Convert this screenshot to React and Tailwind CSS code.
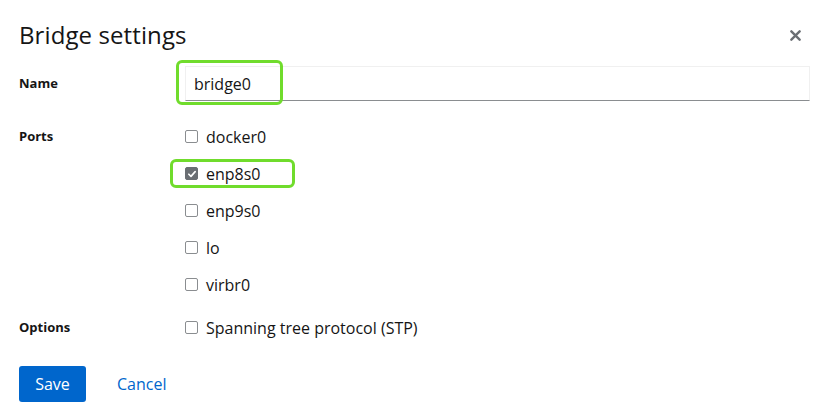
import React, { useState } from 'react';

const ports = ['docker0', 'enp8s0', 'enp9s0', 'lo', 'virbr0'];

const Checkbox = ({ checked, onChange }) => (
  <button
    type="button"
    onClick={onChange}
    className={`w-[13px] h-[13px] rounded-[2px] flex items-center justify-center shrink-0 ${
      checked ? 'bg-[#6a6e73] border border-[#6a6e73]' : 'bg-white border border-[#8a8d90]'
    }`}
  >
    {checked && (
      <svg viewBox="0 0 12 12" className="w-[10px] h-[10px]">
        <path d="M2.2 6.3 L4.8 8.8 L9.8 3.2" fill="none" stroke="white" strokeWidth="2" strokeLinecap="round" strokeLinejoin="round" />
      </svg>
    )}
  </button>
);

const App = () => {
  const [name, setName] = useState('bridge0');
  const [selected, setSelected] = useState({ enp8s0: true });
  const [stp, setStp] = useState(false);

  const toggle = (p) => setSelected({ ...selected, [p]: !selected[p] });

  return (
    <div className="w-[829px] h-[420px] bg-white text-[#151515] font-['Open_Sans',sans-serif] pl-[19px] pr-[19px] pt-[20px]">
      {/* Header */}
      <div className="flex justify-between items-center h-[30px]">
        <h1 className="text-[24px] leading-[30px] font-medium tracking-[0.1px]">Bridge settings</h1>
        <button className="w-[20px] h-[20px] flex items-center justify-center mr-[5px]">
          <svg viewBox="0 0 12 12" className="w-[11px] h-[11px]">
            <path d="M1.5 1.5 L10.5 10.5 M10.5 1.5 L1.5 10.5" stroke="#6a6e73" strokeWidth="2.6" strokeLinecap="round" />
          </svg>
        </button>
      </div>

      {/* Name */}
      <div className="flex items-center mt-[16px] h-[35px]">
        <label className="w-[166px] text-[13px] font-bold">Name</label>
        <div className="relative flex-1">
          <input
            value={name}
            onChange={(e) => setName(e.target.value)}
            className="w-full h-[35px] pl-[8px] text-[16px] border border-[#f0f0f0] border-b-[#8a8d90] outline-none"
          />
          <div className="absolute left-[-9px] top-[-6px] w-[107px] h-[45px] border-[3px] border-[#70dc2c] rounded-[6px] pointer-events-none" />
        </div>
      </div>

      {/* Ports */}
      <div className="flex mt-[17px]">
        <div className="w-[166px] h-[37px] flex items-center text-[13px] font-bold">Ports</div>
        <div className="flex flex-col">
          {ports.map((p) => (
            <div key={p} className="relative h-[37px] flex items-center gap-[8px]">
              <Checkbox checked={!!selected[p]} onChange={() => toggle(p)} />
              <span className="text-[16px]">{p}</span>
              {p === 'enp8s0' && (
                <div className="absolute left-[-15px] top-[4px] w-[125px] h-[29px] border-[3px] border-[#70dc2c] rounded-[6px] pointer-events-none" />
              )}
            </div>
          ))}
        </div>
      </div>

      {/* Options */}
      <div className="flex mt-[6px] h-[37px] items-center">
        <div className="w-[166px] text-[13px] font-bold">Options</div>
        <div className="flex items-center gap-[8px]">
          <Checkbox checked={stp} onChange={() => setStp(!stp)} />
          <span className="text-[16px]">Spanning tree protocol (STP)</span>
        </div>
      </div>

      {/* Actions */}
      <div className="flex items-center gap-[15px] mt-[20px]">
        <button className="bg-[#0066cc] text-white text-[16px] w-[67px] h-[36px] rounded-[3px]">Save</button>
        <button className="text-[#0066cc] text-[16px] px-[16px] h-[36px]">Cancel</button>
      </div>
    </div>
  );
};

export default App;
